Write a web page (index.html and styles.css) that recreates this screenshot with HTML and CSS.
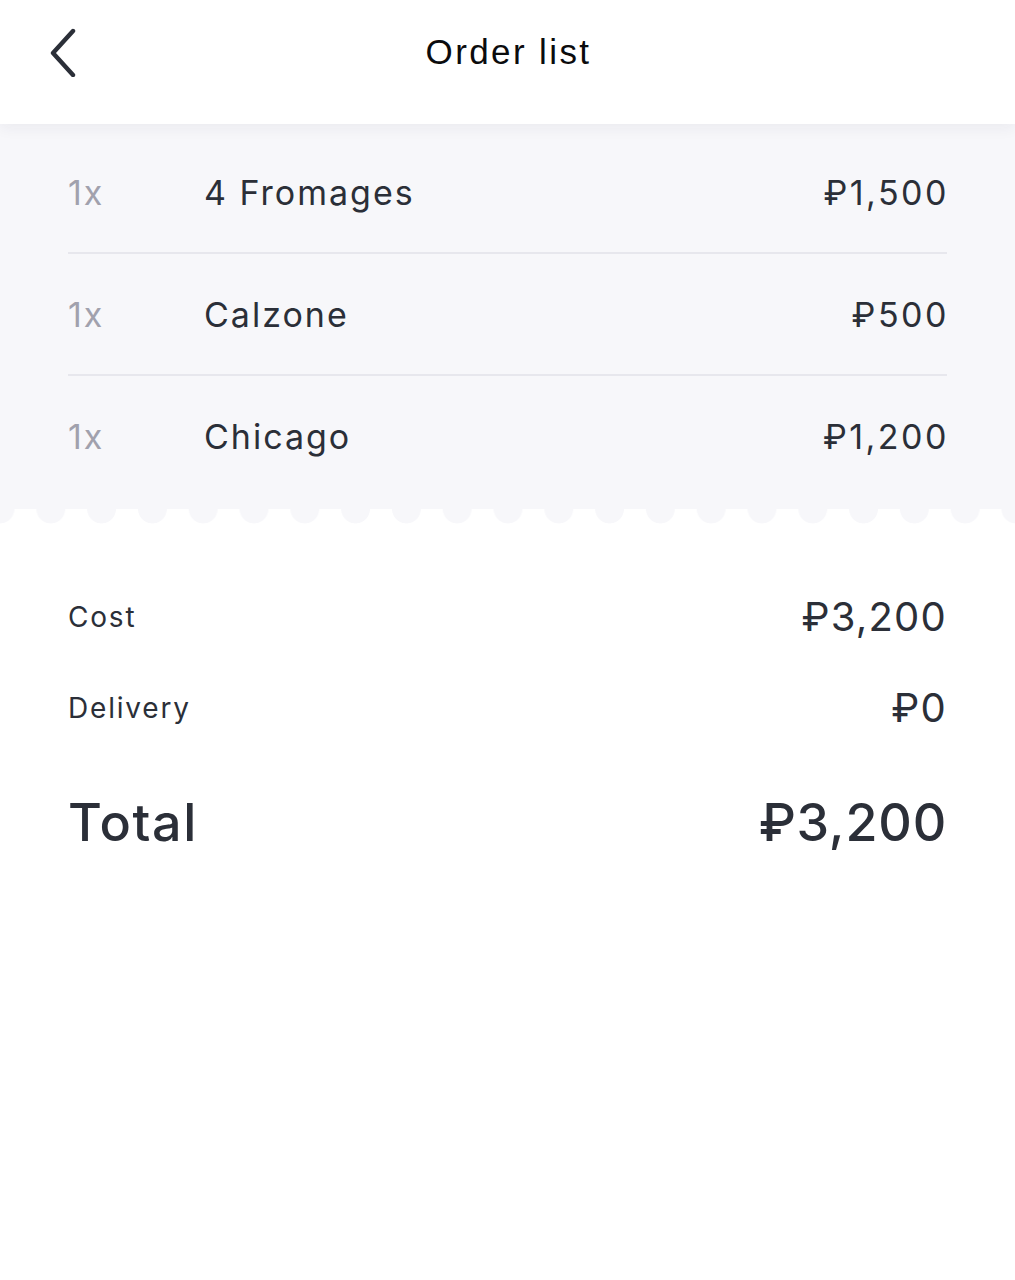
FILE: index.html
```html
<!DOCTYPE html>
<html lang="en">
<head>
<meta charset="utf-8">
<title>Order list</title>
<link rel="stylesheet" href="styles.css">
</head>
<body>
<div class="screen">
  <header class="topbar">
    <button class="back" aria-label="Back">
      <svg width="32" height="50" viewBox="0 0 32 50"><path d="M27 4 L7 26 L27 48" fill="none" stroke="#2b2f38" stroke-width="4.4" stroke-linecap="round" stroke-linejoin="round"/></svg>
    </button>
    <h1 class="title">Order list</h1>
  </header>
  <section class="items">
    <div class="item">
      <span class="qty">1x</span>
      <span class="name">4 Fromages</span>
      <span class="price">₽1,500</span>
    </div>
    <div class="item">
      <span class="qty">1x</span>
      <span class="name">Calzone</span>
      <span class="price">₽500</span>
    </div>
    <div class="item">
      <span class="qty">1x</span>
      <span class="name">Chicago</span>
      <span class="price">₽1,200</span>
    </div>
  </section>
  <div class="scallop"></div>
  <section class="summary">
    <div class="line">
      <span class="label">Cost</span>
      <span class="value">₽3,200</span>
    </div>
    <div class="line">
      <span class="label">Delivery</span>
      <span class="value">₽0</span>
    </div>
    <div class="line total">
      <span class="label">Total</span>
      <span class="value">₽3,200</span>
    </div>
  </section>
</div>
</body>
</html>
```
FILE: styles.css
```css
* { box-sizing: border-box; }
html, body { margin: 0; padding: 0; background: #ffffff; }
body {
  font-family: Inter, "Noto Sans", "DejaVu Sans", sans-serif;
  color: #2b2f38;
  width: 1015px;
}
.screen { width: 1015px; min-height: 1280px; background: #fff; }
.topbar {
  position: relative;
  z-index: 2;
  height: 124px;
  display: flex;
  align-items: center;
  justify-content: center;
  background: #fff;
  box-shadow: 0 4px 14px rgba(40, 40, 70, 0.06);
}
.back {
  position: absolute;
  left: 46px;
  top: 27px;
  border: 0;
  background: none;
  padding: 0;
  width: 32px;
  height: 50px;
}
.back svg { display: block; }
.title {
  margin: -20px 0 0 0;
  font-family: "Liberation Sans", Arial, sans-serif;
  font-weight: 400;
  font-size: 35px;
  color: #0b0b0d;
  letter-spacing: 2.4px;
  padding-left: 2px;
}
.items {
  background: #f7f7fa;
  padding: 8px 68px 12px 68px;
}
.item {
  height: 122px;
  display: flex;
  align-items: center;
  font-size: 34px;
  letter-spacing: 2px;
  border-bottom: 2px solid #e7e7ed;
}
.item:last-child { border-bottom: 0; height: 121px; }
.qty { width: 136px; color: #a1a1ad; }
.name { flex: 1; color: #2b2f38; }
.price { color: #2b2f38; text-align: right; letter-spacing: 2.5px; margin-right: -2px; }
.scallop {
  height: 15px;
  background-image: radial-gradient(circle at 50% 0, #f7f7fa 14px, rgba(247,247,250,0) 14.8px);
  background-size: 50.8px 15px;
  background-position: -25.4px 0;
  background-repeat: repeat-x;
}
.summary { padding: 47px 70px 0 68px; }
.line {
  display: flex;
  align-items: center;
  justify-content: space-between;
  height: 91px;
}
.line .label { font-size: 28px; letter-spacing: 1.8px; color: #2b2f38; }
.line .value { font-size: 40px; letter-spacing: 1.2px; color: #2b2f38; margin-right: -2px; }
.line.total { margin-top: 24px; height: 90px; }
.line.total .label { font-size: 52px; font-weight: 500; letter-spacing: 1.6px; }
.line.total .value { font-size: 52px; font-weight: 500; letter-spacing: 0.8px; }
```
